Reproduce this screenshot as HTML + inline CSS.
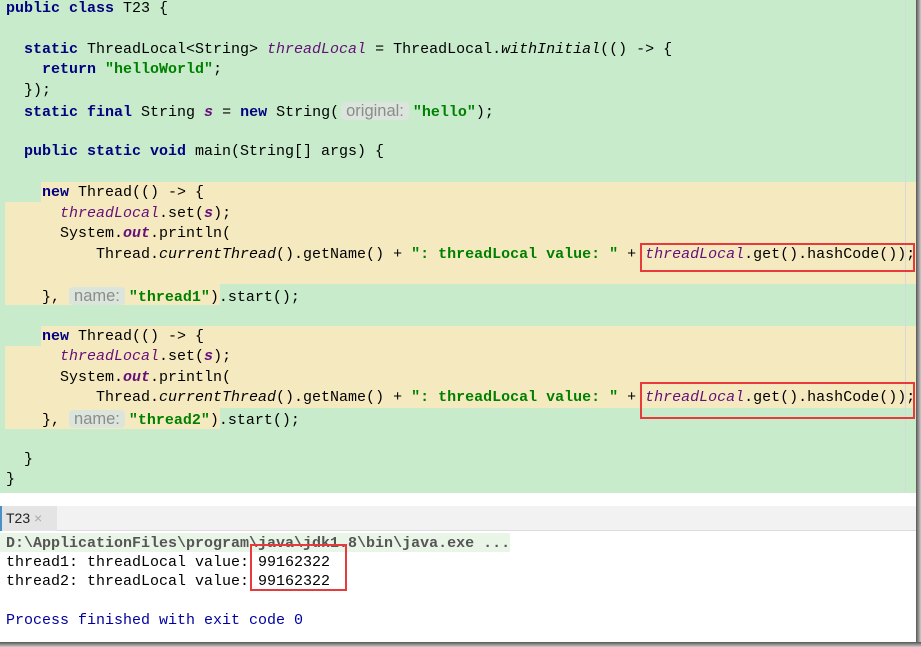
<!DOCTYPE html>
<html><head><meta charset="utf-8"><style>
*{margin:0;padding:0;box-sizing:border-box}
body{width:921px;height:647px;overflow:hidden;background:#fff;position:relative;font-family:"Liberation Mono",monospace}
#ed{position:absolute;left:0;top:0;width:916px;height:493px;background:#c7ebcb}
.y{position:absolute;background:#f5eabf}
.l{position:absolute;height:20.5px;line-height:20.5px;font-size:15px;white-space:pre;color:#000}
.k{color:#000080;font-weight:bold}
.s{color:#008000;font-weight:bold}
.p{color:#660e7a;font-style:italic}
.pb{color:#660e7a;font-style:italic;font-weight:bold}
.i{font-style:italic}
.h{font-family:"Liberation Sans",sans-serif;font-size:16.5px;color:#8c8c8c;background:#dbe5db;border-radius:4px;padding:0 5px;margin:0 4px 0 2px}
.box{position:absolute;border:2px solid #e8393c}
.c{position:absolute;font-size:15px;line-height:19px;white-space:pre;left:6px}
</style></head><body>
<div id="ed">
<div class="y" style="left:41px;top:181.5px;width:875px;height:21px"></div>
<div class="y" style="left:5px;top:202px;width:911px;height:82px"></div>
<div class="y" style="left:5px;top:284px;width:215px;height:21px"></div>
<div class="y" style="left:41px;top:325.5px;width:875px;height:21px"></div>
<div class="y" style="left:5px;top:346px;width:911px;height:62px"></div>
<div class="y" style="left:5px;top:408px;width:215px;height:20.5px"></div>
<div style="position:absolute;left:905px;top:0;width:1px;height:493px;background:#d8d8d8"></div>
</div>
<div class="l" style="left:6px;top:-1.5px"><span class="k">public class</span> T23 {</div>
<div class="l" style="left:24px;top:39.5px"><span class="k">static</span> ThreadLocal&lt;String&gt; <span class="p">threadLocal</span> = ThreadLocal.<span class="i">withInitial</span>(() -&gt; {</div>
<div class="l" style="left:42px;top:60px"><span class="k">return</span> <span class="s">"helloWorld"</span>;</div>
<div class="l" style="left:24px;top:80.5px">});</div>
<div class="l" style="left:24px;top:101px"><span class="k">static final</span> String <span class="pb">s</span> = <span class="k">new</span> String(<span class="h">original:</span><span class="s">"hello"</span>);</div>
<div class="l" style="left:24px;top:142px"><span class="k">public static void</span> main(String[] args) {</div>
<div class="l" style="left:42px;top:183px"><span class="k">new</span> Thread(() -&gt; {</div>
<div class="l" style="left:60px;top:203.5px"><span class="p">threadLocal</span>.set(<span class="pb">s</span>);</div>
<div class="l" style="left:60px;top:224px">System.<span class="pb">out</span>.println(</div>
<div class="l" style="left:96px;top:244.5px">Thread.<span class="i">currentThread</span>().getName() + <span class="s">": threadLocal value: "</span> + <span class="p">threadLocal</span>.get().hashCode());</div>
<div class="l" style="left:42px;top:285.5px">},<span class="h" style="margin-left:9px">name:</span><span class="s">"thread1"</span>).start();</div>
<div class="l" style="left:42px;top:326.5px"><span class="k">new</span> Thread(() -&gt; {</div>
<div class="l" style="left:60px;top:347px"><span class="p">threadLocal</span>.set(<span class="pb">s</span>);</div>
<div class="l" style="left:60px;top:367.5px">System.<span class="pb">out</span>.println(</div>
<div class="l" style="left:96px;top:388px">Thread.<span class="i">currentThread</span>().getName() + <span class="s">": threadLocal value: "</span> + <span class="p">threadLocal</span>.get().hashCode());</div>
<div class="l" style="left:42px;top:408.5px">},<span class="h" style="margin-left:9px">name:</span><span class="s">"thread2"</span>).start();</div>
<div class="l" style="left:24px;top:449.5px">}</div>
<div class="l" style="left:6px;top:470px">}</div>
<div class="box" style="left:640px;top:243px;width:275px;height:29px"></div>
<div class="box" style="left:640px;top:382px;width:275px;height:37px"></div>
<div style="position:absolute;left:0;top:506px;width:916px;height:25px;background:#f2f2f2;border-bottom:1px solid #dcdcdc"></div>
<div style="position:absolute;left:0;top:506px;width:57px;height:25px;background:#e4e4e4;border-left:2px solid #4a90c8;font-family:'Liberation Sans',sans-serif;font-size:14px;line-height:25px;padding-left:4px;color:#222">T23 <span style="color:#aaa">×</span></div>
<div style="position:absolute;left:0;top:533px;width:510px;height:19px;background:#e9f5e7"></div>
<div class="c" style="top:534px;color:#555;font-weight:bold">D:\ApplicationFiles\program\java\jdk1.8\bin\java.exe ...</div>
<div class="c" style="top:553px">thread1: threadLocal value: 99162322</div>
<div class="c" style="top:572px">thread2: threadLocal value: 99162322</div>
<div class="c" style="top:611px;color:#0000a0">Process finished with exit code 0</div>
<div class="box" style="left:250px;top:544px;width:97px;height:47px"></div>
<div style="position:absolute;left:916px;top:0;width:5px;height:647px;background:linear-gradient(90deg,#555,#ccc)"></div>
<div style="position:absolute;left:0;top:642px;width:921px;height:5px;background:linear-gradient(180deg,#555,#ccc)"></div>
</body></html>
